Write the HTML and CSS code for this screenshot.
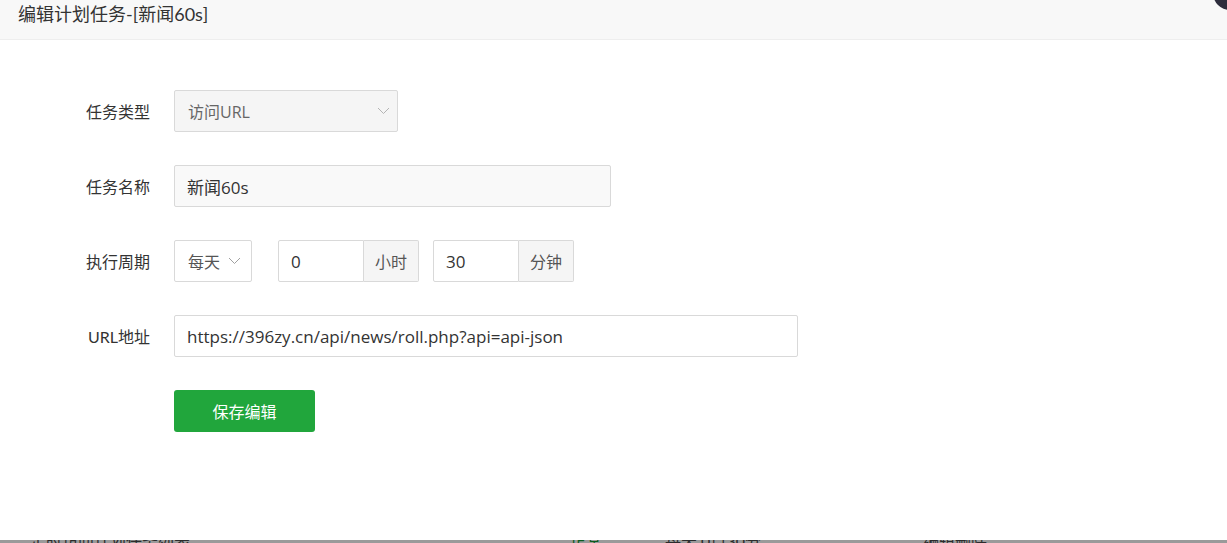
FILE: index.html
```html
<!DOCTYPE html>
<html lang="zh-CN">
<head>
  <meta charset="UTF-8">
  <meta name="viewport" content="width=device-width, initial-scale=1.0">
  <title>编辑计划任务</title>
  <link rel="stylesheet" href="styles.css">
</head>
<body>

  <!-- Edit task layer -->
  <div class="layer">
    <div class="layer-title">编辑计划任务-[新闻60s]</div>
    <span class="layer-close"></span>

    <form class="layer-form">
      <div class="form-item">
        <label class="form-label">任务类型</label>
        <div class="select select-disabled select-type">
          <span>访问URL</span>
          <svg class="chevron" width="13" height="8" viewBox="0 0 13 8"><path d="M1 1 L6.5 6.5 L12 1" fill="none" stroke="#b4b4b4" stroke-width="1"/></svg>
        </div>
      </div>

      <div class="form-item">
        <label class="form-label">任务名称</label>
        <input class="input input-name" type="text" value="新闻60s">
      </div>

      <div class="form-item">
        <label class="form-label">执行周期</label>
        <div class="select select-cycle">
          <span>每天</span>
          <svg class="chevron" width="13" height="8" viewBox="0 0 13 8"><path d="M1 1 L6.5 6.5 L12 1" fill="none" stroke="#a0a0a0" stroke-width="1"/></svg>
        </div>
        <div class="input-group group-hour">
          <input class="input" type="text" value="0">
          <span class="addon">小时</span>
        </div>
        <div class="input-group group-minute">
          <input class="input" type="text" value="30">
          <span class="addon">分钟</span>
        </div>
      </div>

      <div class="form-item">
        <label class="form-label">URL地址</label>
        <input class="input input-url" type="text" value="https://396zy.cn/api/news/roll.php?api=api-json">
      </div>

      <div class="form-item">
        <button class="btn" type="button">保存编辑</button>
      </div>
    </form>
  </div>

  <!-- Page behind the shade -->
  <div class="page-behind">
    <span class="behind-a">定时访问计划任务列表</span>
    <span class="behind-b">正常</span>
    <span class="behind-c">每天 0点30分</span>
    <span class="behind-d">编辑删除</span>
  </div>

</body>
</html>
```

FILE: styles.css
```css
/* General Styles */
* {
  margin: 0;
  padding: 0;
  box-sizing: border-box;
}

body {
  font-family: Lato, "Noto Sans CJK SC", sans-serif;
  background-color: #9a9a9a;
  color: #333;
  height: 543px;
  overflow: hidden;
}

/* Layer */
.layer {
  position: relative;
  z-index: 2;
  height: 540px;
  background-color: #fff;
}

.layer-title {
  height: 40px;
  line-height: 28px;
  padding-left: 18px;
  font-size: 18px;
  color: #333;
  background-color: #f8f8f8;
  border-bottom: 1px solid #eee;
}

.layer-close {
  position: absolute;
  top: -24px;
  right: -20px;
  width: 34px;
  height: 34px;
  border-radius: 50%;
  background-color: #2e2d3c;
}

/* Form */
.layer-form {
  padding-top: 50px;
  display: flex;
  flex-direction: column;
  gap: 33px;
}

.form-item {
  display: flex;
  align-items: center;
  height: 42px;
  padding-left: 174px;
  position: relative;
}

.form-label {
  position: absolute;
  left: 0;
  width: 150px;
  text-align: right;
  font-size: 16px;
  color: #333;
}

.select,
.input,
.addon {
  height: 42px;
  border: 1px solid #d9d9d9;
  border-radius: 2px;
  font-family: "Open Sans", "Noto Sans CJK SC", sans-serif;
  font-size: 16px;
}

.input {
  font-size: 17px;
}

.select {
  display: flex;
  align-items: center;
  padding: 0 7px 0 13px;
  background-color: #fff;
  color: #555;
}

.select .chevron {
  margin-left: auto;
}

.select-disabled {
  background-color: #f5f5f5;
  color: #666;
}

.select-type {
  width: 224px;
}

.select-cycle {
  width: 78px;
  padding-right: 10px;
}

.input {
  padding: 0 12px;
  color: #333;
  background-color: #fff;
  outline: none;
}

.input-name {
  width: 437px;
  background-color: #f9f9f9;
}

.input-url {
  width: 624px;
}

/* Input group */
.input-group {
  display: flex;
}

.input-group .input {
  width: 86px;
  border-radius: 2px 0 0 2px;
}

.addon {
  width: 55px;
  border-left: none;
  border-radius: 0 2px 2px 0;
  display: flex;
  align-items: center;
  justify-content: center;
  background-color: #f5f5f5;
  color: #555;
}

.group-hour {
  margin-left: 26px;
}

.group-minute {
  margin-left: 14px;
}

/* Button */
.btn {
  width: 141px;
  height: 42px;
  border: none;
  border-radius: 3px;
  background-color: #21a63c;
  color: #fff;
  font-family: Lato, "Noto Sans CJK SC", sans-serif;
  font-size: 16px;
}

/* Content behind shade */
.page-behind {
  position: relative;
  z-index: 1;
  margin-top: -12px;
  height: 20px;
  font-size: 16px;
  color: #2c2c2c;
}

.page-behind span {
  position: absolute;
  top: 0;
}

.behind-a { left: 30px; }
.behind-b { left: 570px; color: #0b5c1e; }
.behind-c { left: 665px; }
.behind-d { left: 923px; }
```
